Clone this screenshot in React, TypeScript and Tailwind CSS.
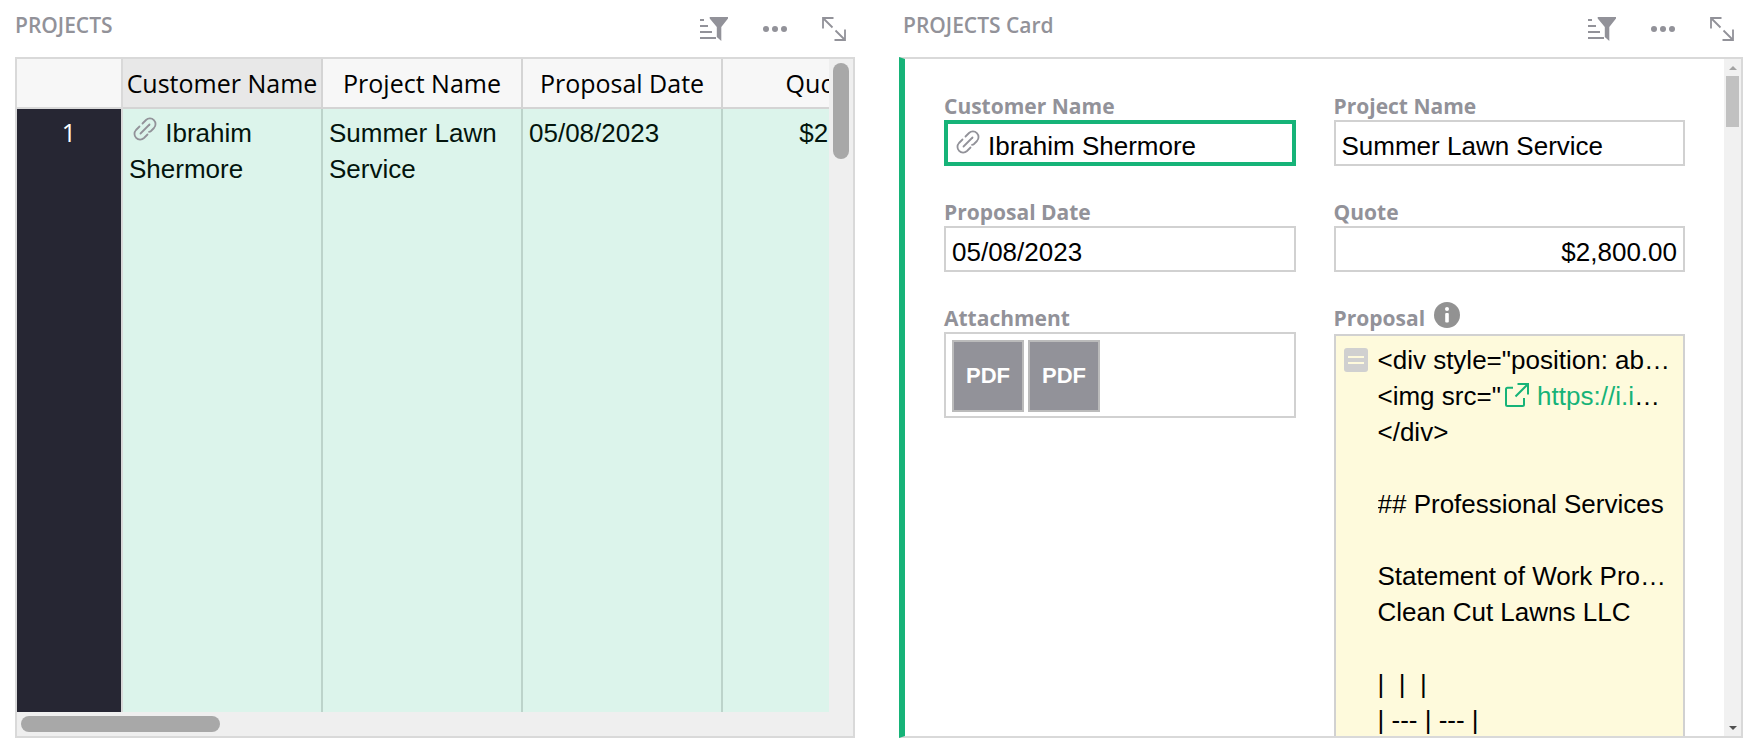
import type { ReactNode } from "react"

const columns = ["Customer Name", "Project Name", "Proposal Date", "Quote"]

function LinkIcon({ className = "" }: { className?: string }) {
  return (
    <svg className={className} width="24" height="24" viewBox="0 0 24 24" fill="none" stroke="#929299" strokeWidth="1.8" strokeLinecap="round">
      <path d="M7.500 16.500l9-9" />
      <path d="M9.500 6.500L13 3a5.660 5.660 0 0 1 8 8l-3 3a3 3 0 0 1-2 .8" />
      <path d="M14.500 17.500L11 21a5.660 5.660 0 0 1-8-8l3.500-3.500" />
    </svg>
  )
}

function ExternalIcon() {
  return (
    <svg className="mr-px ml-1 inline align-[-2px]" width="24" height="24" viewBox="0 0 24 24" fill="none" stroke="#16b378" strokeWidth="2">
      <path d="M8 4.800H2.500A1.500 1.500 0 0 0 1 6.300V21.500A1.500 1.500 0 0 0 2.500 23H17.500A1.500 1.500 0 0 0 19 21.500V15" />
      <path d="M10.500 13.500L23 1M12.500 1H23V11.500" />
    </svg>
  )
}

function SectionHeader({ title }: { title: string }) {
  return (
    <header className="flex h-[57px] shrink-0 items-start justify-between pr-[9px] text-[#929299]">
      <h2 className="pt-2.5 font-['Open_Sans',sans-serif] text-[21px] leading-[30px] font-semibold">{title}</h2>
      <div className="flex gap-[35px] pt-[17px]">
        <button type="button" aria-label="Sort and filter">
          <svg width="28" height="24" viewBox="0 0 28 24" fill="currentColor">
            <path d="M0 2h4v2H0zM0 8h8v2H0zM0 14h12v2H0zM0 20h16v2H0z" />
            <path d="M9.700 0H28v1.500L21.300 10v14l-4.500-4V10L9.700 1.500z" />
          </svg>
        </button>
        <button type="button" aria-label="More options">
          <svg width="24" height="24" viewBox="0 0 24 24" fill="currentColor">
            <circle cx="3" cy="12" r="3" />
            <circle cx="12" cy="12" r="3" />
            <circle cx="21" cy="12" r="3" />
          </svg>
        </button>
        <button type="button" aria-label="Expand section">
          <svg width="24" height="24" viewBox="0 0 24 24" fill="none" stroke="currentColor" strokeWidth="1.8">
            <path d="M1 11.500V1h10.500M1 1l9.500 9.500" />
            <path d="M23 12.500V23H12.500M23 23l-9.500-9.500" />
          </svg>
        </button>
      </div>
    </header>
  )
}

function ProjectsGrid() {
  return (
    <section className="flex min-w-0 flex-[210_1_0%] flex-col">
      <SectionHeader title="PROJECTS" />
      <div className="grid min-h-0 flex-1 grid-cols-[minmax(0,1fr)_24px] grid-rows-[minmax(0,1fr)_24px] border-2 border-[#d9d9d9] bg-[#efefef]">
        <div className="overflow-hidden bg-white">
          <table className="h-full w-[906px] table-fixed border-separate border-spacing-0">
            <thead className="font-['Open_Sans',sans-serif] text-[25px] leading-9">
              <tr className="h-[50px]">
                <th className="w-[106px] border-r-2 border-b-2 border-[#d9d9d9] bg-[#f7f7f7]" aria-label="Row" />
                {columns.map((name, i) => (
                  <th
                    key={name}
                    className={
                      i === 0
                        ? "border-r-2 border-b-2 border-[#d4d4d4] bg-[#e8e8e8] p-0 font-normal whitespace-nowrap"
                        : "border-r-2 border-b-2 border-[#d4d4d4] bg-[#f7f7f7] p-0 font-normal whitespace-nowrap"
                    }
                  >
                    {name}
                  </th>
                ))}
              </tr>
            </thead>
            <tbody>
              <tr className="bg-[#dcf4eb] align-top text-[26px] leading-9 text-[#03140d]">
                <th className="border-r-2 border-[#d9d9d9] bg-[#262633] pt-[5px] font-['Open_Sans',sans-serif] text-[25px] leading-9 font-normal text-white">1</th>
                <td className="border-r-2 border-[#bcd3ca] px-1.5 pt-1.5">
                  <LinkIcon className="mr-px mb-px ml-1 inline align-baseline" /> Ibrahim Shermore
                </td>
                <td className="border-r-2 border-[#bcd3ca] px-1.5 pt-1.5">Summer Lawn Service</td>
                <td className="border-r-2 border-[#bcd3ca] px-1.5 pt-1.5">05/08/2023</td>
                <td className="border-r-2 border-[#bcd3ca] px-1.5 pt-1.5 text-right">$2,800.00</td>
              </tr>
            </tbody>
          </table>
        </div>
        <div className="p-1">
          <div className="h-24 w-4 rounded-full bg-[#a8a8a8]" />
        </div>
        <div className="p-1">
          <div className="h-4 w-[199px] rounded-full bg-[#a8a8a8]" />
        </div>
      </div>
    </section>
  )
}

const labelClass = "block font-['Open_Sans',sans-serif] text-[21px] leading-7 font-bold text-[#929299]"

function TextField({ id, label, value, alignRight }: { id: string; label: string; value: string; alignRight?: boolean }) {
  return (
    <div>
      <label htmlFor={id} className={labelClass}>{label}</label>
      <input
        id={id}
        defaultValue={value}
        className={
          alignRight
            ? "block h-[46px] w-full border-2 border-[#d1d1d1] px-1.5 pt-1.5 text-right text-[26px] leading-9 outline-none"
            : "block h-[46px] w-full border-2 border-[#d1d1d1] px-1.5 pt-1.5 text-[26px] leading-9 outline-none"
        }
      />
    </div>
  )
}

// Markdown source shown in the formula cell, one entry per line
const proposalLines: ReactNode[] = [
  '<div style="position: ab…',
  <>
    {'<img src="'}
    <ExternalIcon /> <a href="#" className="text-[#16b378]">https://i.i</a>…
  </>,
  "</div>",
  "",
  "## Professional Services",
  "",
  "Statement of Work Pro…",
  "Clean Cut Lawns LLC",
  "",
  "|  |  |",
  "| --- | --- |",
]

function ProjectCard() {
  return (
    <section className="flex min-w-0 flex-[211_1_0%] flex-col">
      <div className="pl-1">
        <SectionHeader title="PROJECTS Card" />
      </div>
      <div className="flex min-h-0 flex-1 border-2 border-l-6 border-[#d9d9d9] border-l-[#16b378]">
        <div className="grid min-w-0 flex-1 grid-cols-2 content-start items-start gap-x-[38px] gap-y-8 overflow-hidden px-[39px] pt-[33px]">
          <div>
            <label htmlFor="customer" className={labelClass}>Customer Name</label>
            <div className="flex h-[46px] items-start border-4 border-[#16b378] px-1 pt-1">
              <LinkIcon className="mt-0.5 ml-1 shrink-0" />
              <input id="customer" defaultValue="Ibrahim Shermore" className="ml-2 block h-9 w-full min-w-0 text-[26px] leading-9 outline-none" />
            </div>
          </div>
          <TextField id="project" label="Project Name" value="Summer Lawn Service" />
          <TextField id="date" label="Proposal Date" value="05/08/2023" />
          <TextField id="quote" label="Quote" value="$2,800.00" alignRight />
          <div>
            <span className={labelClass}>Attachment</span>
            <div className="flex gap-1 border-2 border-[#d1d1d1] px-1.5 pt-1.5 pb-1">
              <button type="button" className="size-[72px] border-2 border-[#bbbbbb] bg-[#929299] pb-0.5 text-[22px] font-bold text-white">PDF</button>
              <button type="button" className="size-[72px] border-2 border-[#bbbbbb] bg-[#929299] pb-0.5 text-[22px] font-bold text-white">PDF</button>
            </div>
          </div>
          <div>
            <div className="-mt-0.5 flex h-8 items-start gap-[9px]">
              <span className={`${labelClass} pt-0.5`}>Proposal</span>
              <button type="button" aria-label="Proposal description">
                <svg width="26" height="26" viewBox="0 0 26 26">
                  <circle cx="13" cy="13" r="13" fill="#929292" />
                  <circle cx="13" cy="7" r="2" fill="#fff" />
                  <rect x="11.200" y="11" width="3.600" height="9.500" rx="1" fill="#fff" />
                </svg>
              </button>
            </div>
            <div className="flex gap-2.5 border-2 border-[#d1d1d1] bg-[#fefadc] pt-1.5 pr-1 pl-2 text-[26px] leading-9">
              <svg className="mt-1.5 shrink-0" width="24" height="24" viewBox="0 0 24 24">
                <rect width="24" height="24" rx="3" fill="#d0d0d0" />
                <path d="M4 9h16M4 15h16" stroke="#fefadc" strokeWidth="2" />
              </svg>
              <div className="min-w-0 flex-1">
                {proposalLines.map((line, i) => (
                  <div key={i} className="h-9 overflow-hidden whitespace-pre">{line}</div>
                ))}
              </div>
            </div>
          </div>
        </div>
        {/* Scrollbar */}
        <div className="flex w-[17px] shrink-0 flex-col items-center bg-[#f1f1f1]">
          <div className="flex h-[17px] items-center">
            <svg width="8" height="4" viewBox="0 0 8 4"><path d="M0 4L4 0l4 4z" fill="#a3a3a3" /></svg>
          </div>
          <div className="h-[51px] w-[13px] bg-[#c1c1c1]" />
          <div className="mt-auto flex h-[17px] items-center">
            <svg width="8" height="4" viewBox="0 0 8 4"><path d="M0 0h8L4 4z" fill="#505050" /></svg>
          </div>
        </div>
      </div>
    </section>
  )
}

export default function App() {
  return (
    <main className="flex h-screen gap-11 bg-white pb-[5px] pl-[15px] font-['Liberation_Sans',Arial,sans-serif] text-black">
      <ProjectsGrid />
      <ProjectCard />
    </main>
  )
}
